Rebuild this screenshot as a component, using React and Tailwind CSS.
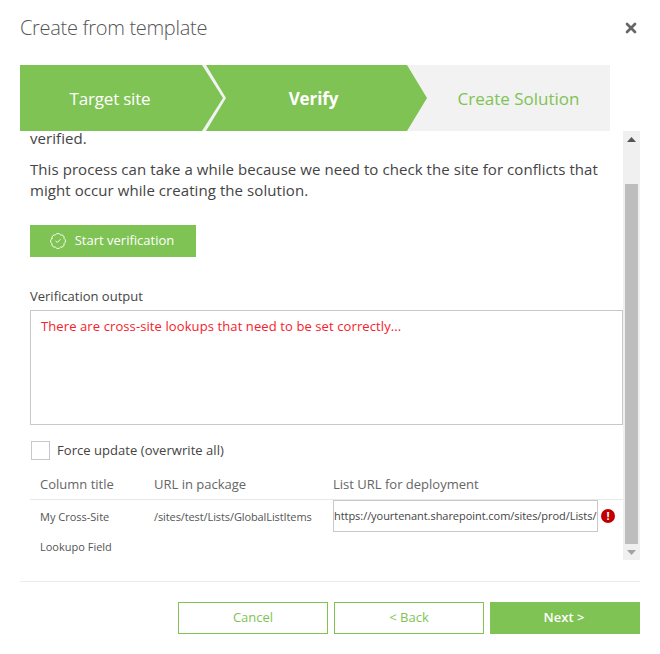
import { BadgeCheck, X } from "lucide-react";

const font = "font-['Open_Sans','Noto_Sans',sans-serif]";

export default function App() {
  return (
    <div className={`w-[660px] h-[654px] bg-white flex flex-col px-5 text-[#444] ${font}`}>
      {/* Header */}
      <div className="h-[65px] shrink-0 flex items-center justify-between pb-[10px]">
        <h1 className="text-[20px] font-light text-[#555] tracking-[-0.3px]">Create from template</h1>
        <X className="w-[16px] h-[16px] text-[#666] mr-[1px]" strokeWidth={4} />
      </div>

      {/* Wizard steps */}
      <div className="w-[590px] h-[66px] shrink-0 flex bg-[#f2f2f2] text-[17px]">
        <div className="w-[203px] pt-[2px] bg-[#7fc354] text-white tracking-[-0.2px] flex items-center justify-center pr-[23px] [clip-path:polygon(0_0,182px_0,100%_50%,182px_100%,0_100%)] z-10">
          Target site
        </div>
        <div className="w-[221px] pt-[2px] pr-[6px] -ml-[17px] bg-[#7fc354] text-white font-bold tracking-[-0.1px] flex items-center justify-center [clip-path:polygon(0_0,201px_0,100%_50%,201px_100%,0_100%,20px_50%)] z-10">
          Verify
        </div>
        <div className="w-[198px] -ml-[15px] bg-white flex-1 [clip-path:polygon(0_0,100%_0,100%_100%,0_100%,20px_50%)]">
          <div className="h-full pt-[2px] bg-[#f2f2f2] text-[#7fc354] flex items-center justify-center pl-[15px]">Create Solution</div>
        </div>
      </div>

      {/* Scrollable body */}
      <div className="h-[429px] shrink-0 flex">
        <div className="w-[603px] overflow-hidden">
          <div className="-mt-[3px] pl-[10px]">
            <p className="text-[15px] leading-[21px] tracking-[0.07px]">verified.</p>
            <p className="text-[15px] leading-[21px] tracking-[0.07px] mt-[10px]">
              This process can take a while because we need to check the site for conflicts that might occur while creating the solution.
            </p>
            <button className="mt-[24px] w-[166px] h-[32px] pr-[3px] bg-[#7fc354] text-white text-[13px] font-medium flex items-center justify-center gap-[8px]">
              <BadgeCheck className="w-[18px] h-[18px]" strokeWidth={1.25} />
              Start verification
            </button>
            <div className="mt-[30px] text-[13px] leading-[18px]">Verification output</div>
            <div className="mt-[5px] h-[115px] border border-[#c8c8c8] px-[10px] pt-[6px] text-[13px] leading-[18px] tracking-[0.1px] text-[#f5222d]">
              There are cross-site lookups that need to be set correctly...
            </div>
            <label className="mt-[16px] ml-[1px] flex items-center gap-[7px] text-[13px] tracking-[0.05px]">
              <span className="w-[19px] h-[19px] border border-[#c8c8c8] block" />
              Force update (overwrite all)
            </label>

            {/* Lookups table */}
            <div className="mt-[10px] flex h-[29px] items-center border-b border-[#e8e8e8] text-[13px] text-[#666]">
              <div className="w-[124px] pl-[10px]">Column title</div>
              <div className="w-[179px]">URL in package</div>
              <div className="flex-1">List URL for deployment</div>
            </div>
            <div className="flex text-[11px] text-[#555]">
              <div className="w-[124px] pl-[10px] pt-[2px] leading-[30px]">
                My Cross-Site
                <br />
                Lookupo Field
              </div>
              <div className="w-[179px] pt-[2px] leading-[30px] tracking-[-0.1px] whitespace-nowrap">/sites/test/Lists/GlobalListItems</div>
              <div className="flex items-start gap-[3px]">
                <div className="w-[265px] h-[32px] pt-[1px] border border-[#c8c8c8] flex items-center overflow-hidden whitespace-nowrap text-[11px] tracking-[-0.05px] text-[#444]">
                  https://yourtenant.sharepoint.com/sites/prod/Lists/
                </div>
                <div className="mt-[9px] w-[14px] h-[14px] rounded-full bg-[#c00000] text-white text-[11px] font-bold leading-[14px] text-center">!</div>
              </div>
            </div>
          </div>
        </div>

        {/* Scrollbar */}
        <div className="w-[17px] bg-[#f0f0f0] flex flex-col items-center">
          <svg className="mt-[6px] shrink-0" width="9" height="5" viewBox="0 0 9 5"><path d="M4.5 0 9 5H0z" fill="#555" /></svg>
          <div className="mt-[42px] w-[13px] h-[360px] bg-[#bdbdbd] shrink-0" />
          <svg className="mt-[6px] shrink-0" width="9" height="5" viewBox="0 0 9 5"><path d="M0 0h9L4.5 5z" fill="#a3a3a3" /></svg>
        </div>
      </div>

      {/* Footer */}
      <div className="mt-[21px] border-t border-[#ececec] pt-[20px] flex justify-end gap-[6px] text-[13px]">
        <button className="w-[150px] h-[32px] border border-[#7fc354] text-[#7fc354]">Cancel</button>
        <button className="w-[150px] h-[32px] border border-[#7fc354] text-[#7fc354]">&lt; Back</button>
        <button className="w-[150px] h-[32px] pr-[2px] bg-[#7fc354] text-white font-semibold">Next &gt;</button>
      </div>
    </div>
  );
}
